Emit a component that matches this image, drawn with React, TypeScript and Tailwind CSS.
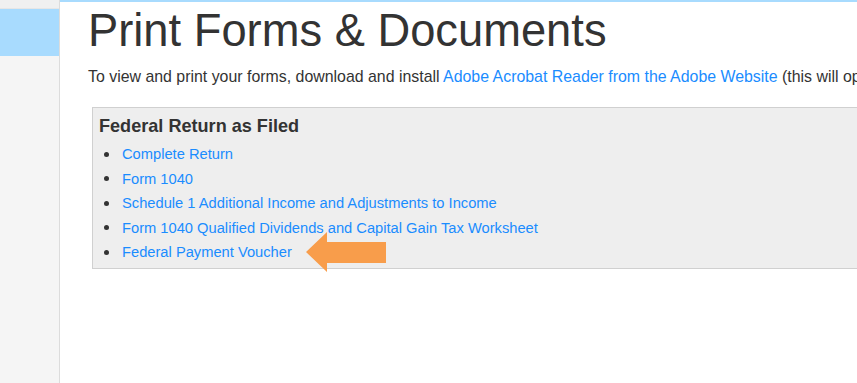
export default function App() {
  const items = [
    "Complete Return",
    "Form 1040",
    "Schedule 1 Additional Income and Adjustments to Income",
    "Form 1040 Qualified Dividends and Capital Gain Tax Worksheet",
    "Federal Payment Voucher",
  ];
  return (
    <div
      className="flex h-[383px] w-[857px] overflow-hidden bg-white text-[#333]"
      style={{ fontFamily: '"Liberation Sans", Arial, sans-serif' }}
    >
      <aside className="flex w-[60px] shrink-0 flex-col border-r border-[#dcdcdc] bg-[#f5f5f5]">
        <div className="h-[9px] bg-[#f0f0f0] border-b border-[#e6e6e6]" />
        <div className="h-[47px] bg-[#a8dbfe]" />
      </aside>
      <main className="flex min-w-0 flex-1 flex-col overflow-hidden">
        <div className="h-[2px] shrink-0 bg-[#a8dbfe]" />
        <div className="pl-[28px] whitespace-nowrap">
          <h1 className="mt-[3px] text-[45.3px] leading-[52px] font-normal text-[#333]">
            Print Forms &amp; Documents
          </h1>
          <p className="mt-[10px] text-[15.9px] leading-[20px] text-[#333]">
            To view and print your forms, download and install{" "}
            <a className="text-[#1a8cff]">Adobe Acrobat Reader from the Adobe Website</a>{" "}
            (this will open in a new window).
          </p>
          <div className="relative mt-[20px] ml-[4px] h-[162px] border border-r-0 border-[#d0d0d0] bg-[#eeeeee] pl-[6px] pt-[7px]">
            <h2 className="text-[18.1px] leading-[22px] font-bold text-[#333]">
              Federal Return as Filed
            </h2>
            <ul className="mt-[5px] pl-[5px] text-[14.7px] leading-[24.5px]">
              {items.map((t) => (
                <li key={t} className="flex items-center">
                  <span className="mr-[13px] h-[5px] w-[5px] rounded-full bg-[#333]" />
                  <a className="text-[#1a8cff]">{t}</a>
                </li>
              ))}
            </ul>
            <svg
              className="absolute left-[212px] top-[123px]"
              width="82"
              height="42"
              viewBox="0 0 82 42"
            >
              <polygon
                points="1,21 22,1 22,11 81,11 81,32 22,32 22,41"
                fill="#f89d4b"
              />
            </svg>
          </div>
        </div>
      </main>
    </div>
  );
}
